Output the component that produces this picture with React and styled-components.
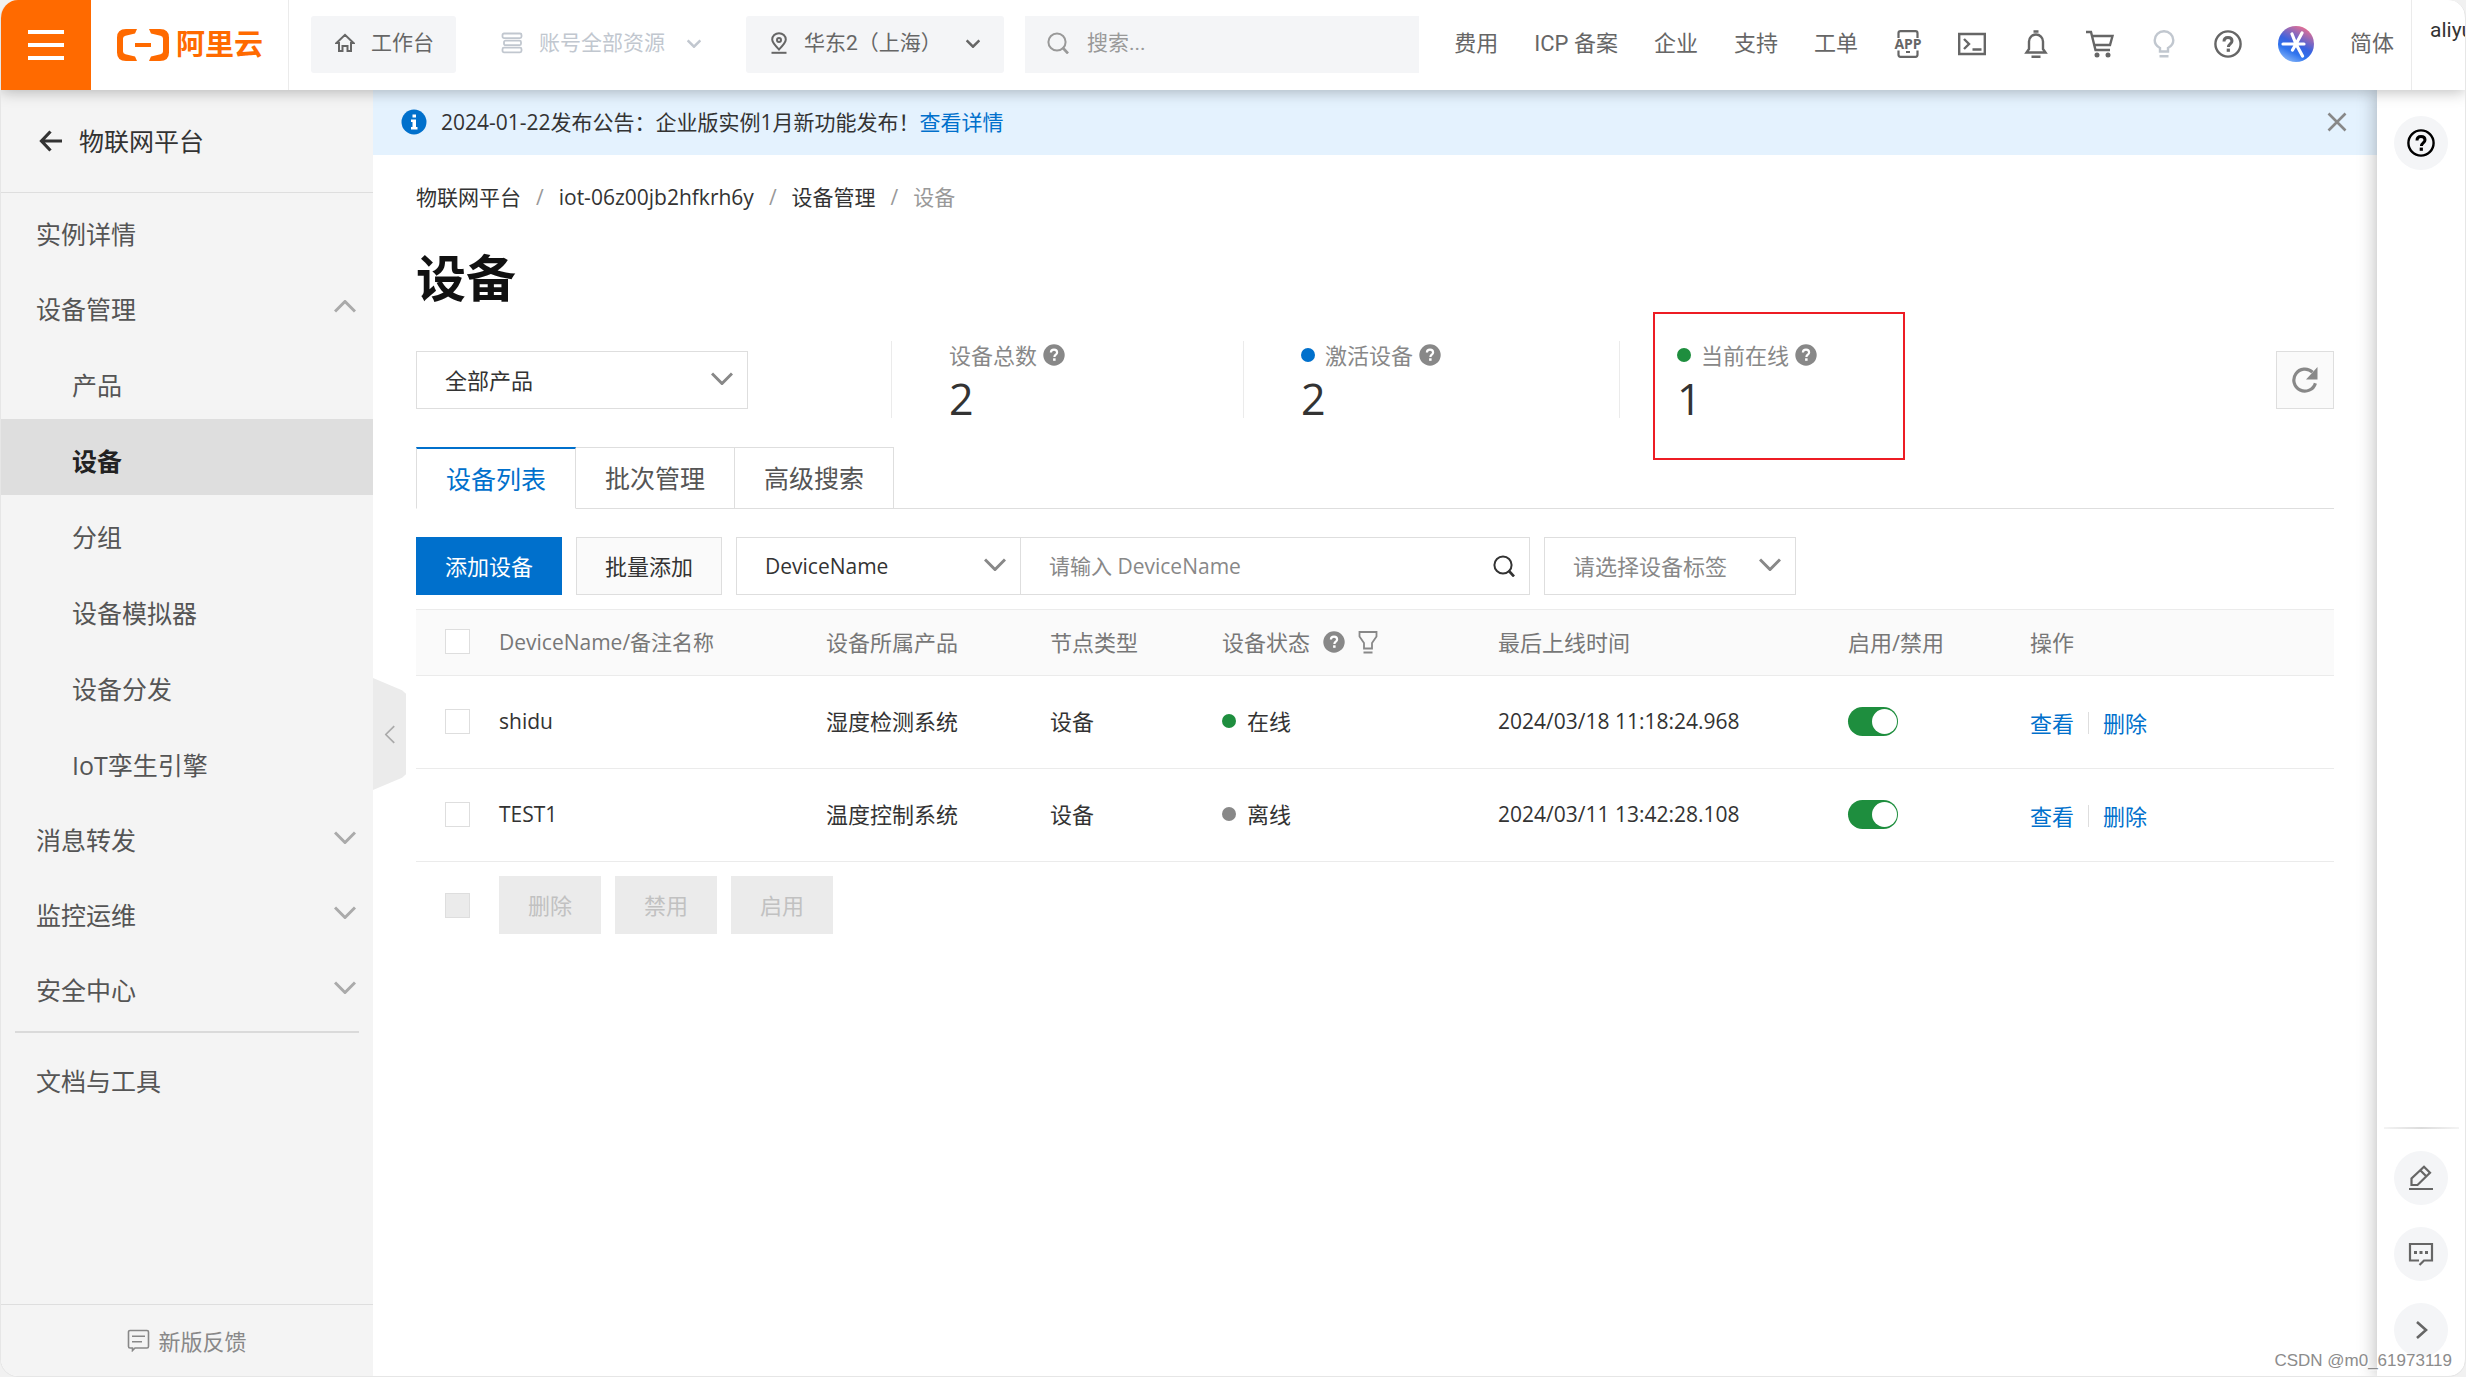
import styled, { createGlobalStyle } from 'styled-components';

const GlobalStyle = createGlobalStyle`
  *, *::before, *::after {
    box-sizing: border-box;
  }

  body {
    margin: 0;
    background: #f1f1f1;
    font-family: "Open Sans", "Noto Sans CJK SC", sans-serif;
    font-size: 22px;
    line-height: 32px;
    color: #333;
  }

  button, input, select {
    font: inherit;
    color: inherit;
    margin: 0;
    padding: 0;
    border: 0;
    border-radius: 0;
    background: none;
  }

  a {
    color: inherit;
    text-decoration: none;
  }

  svg {
    display: block;
    flex: none;
  }
`;

/* ---------- icons ---------- */

const Icon = ({ size = 24, w, h, box = '0 0 24 24', sw = 2, children }) => (
  <svg
    width={w || size}
    height={h || size}
    viewBox={box}
    fill="none"
    stroke="currentColor"
    strokeWidth={sw}
    aria-hidden="true"
  >
    {children}
  </svg>
);

const Chevron = ({ w = 22, h = 13, sw = 3 }) => (
  <Icon w={w} h={h} box="0 0 22 13" sw={sw}><path d="M1 1.5l10 10 10-10" /></Icon>
);

const HelpSolid = () => (
  <Icon size={22} box="0 0 22 22">
    <circle cx="11" cy="11" r="10.7" fill="currentColor" stroke="none" />
    <path d="M7.9 8.6c0-1.9 1.3-3 3.1-3s3.1 1.1 3.1 2.8c0 2.2-2.7 2.3-2.7 4.5" stroke="#fff" strokeWidth="2.2" />
    <rect x="10.1" y="14.3" width="2.5" height="2.5" fill="#fff" stroke="none" />
  </Icon>
);

const HelpRing = () => (
  <Icon size={28} box="0 0 28 28" sw={2.4}>
    <circle cx="14" cy="14" r="12.6" />
    <path d="M10 11.4c0-2.5 1.7-4 4-4s4 1.4 4 3.6c0 2.8-3.6 3-3.6 6" strokeWidth="3" />
    <rect x="12.7" y="18.6" width="3.2" height="3.2" fill="currentColor" stroke="none" />
  </Icon>
);

const HomeIcon = () => (
  <Icon w={20} h={20} box="0 0 20 20">
    <path d="M1.5 10L10 1.8 18.500 10H16v8h-3.500v-5h-5v5H4v-8z" />
  </Icon>
);

const StackIcon = () => (
  <Icon w={22} h={22} box="0 0 22 22" sw={1.8}>
    <rect x="1.500" y="1.500" width="19" height="4.600" rx="1.500" />
    <rect x="3" y="8.600" width="17" height="4.600" rx="1.500" />
    <rect x="1.500" y="15.700" width="19" height="4.600" rx="1.500" />
  </Icon>
);

const PinIcon = () => (
  <Icon w={18} h={22} box="0 0 18 22">
    <path d="M9 17.500C5 13.500 2.200 10.800 2.200 7.600a6.800 6.400 0 0 1 13.600 0C15.800 10.800 13 13.500 9 17.500z" />
    <circle cx="9" cy="8" r="2" />
    <path d="M1.500 20.800h15" />
  </Icon>
);

const SearchIcon = () => (
  <Icon size={22} box="0 0 22 22">
    <circle cx="10" cy="10" r="8.600" />
    <path d="M15.500 15.500l5.500 6" strokeWidth="2.600" />
  </Icon>
);

const AppIcon = () => (
  <Icon size={28} box="0 0 28 28" sw={2.2}>
    <path d="M4.500 8V3.200a2 2 0 0 1 2-2h15a2 2 0 0 1 2 2V8M4.500 20.500v4.300a2 2 0 0 0 2 2h15a2 2 0 0 0 2-2v-4.300M12 22h4" />
    <text
      x="14"
      y="19"
      textAnchor="middle"
      fill="currentColor"
      stroke="none"
      fontFamily="Open Sans"
      fontSize="14"
      fontWeight="700"
    >
      APP
    </text>
  </Icon>
);

const TerminalIcon = () => (
  <Icon size={28} box="0 0 28 28" sw={2.4}>
    <path d="M1.200 4h25.600v20H1.200zM6 9l5 5-5 5M14.500 19.500h9" />
  </Icon>
);

const BellIcon = () => (
  <Icon size={28} box="0 0 28 28" sw={2.4}>
    <path d="M4.500 22.500h19l-2.500-3.500v-7.500a7 7 0 0 0-14 0V19zM9.500 26.700h9M11.500 1.500h5" />
  </Icon>
);

const CartIcon = () => (
  <Icon size={28} box="0 0 28 28" sw={2.4}>
    <path d="M0 2h5l4.500 18H24M6 6h20.500l-2.500 9H8.500" />
    <circle cx="11" cy="25" r="2.500" fill="currentColor" stroke="none" />
    <circle cx="22" cy="25" r="2.500" fill="currentColor" stroke="none" />
  </Icon>
);

const BulbIcon = () => (
  <Icon size={28} box="0 0 28 28" sw={2.4}>
    <path d="M10 21.500V18C6.500 16.300 4.700 13.500 4.700 10.300a9.300 9 0 0 1 18.600 0c0 3.200-1.800 6-5.300 7.700v3.500zM9.500 26.200h9" />
  </Icon>
);

const SparkLogo = () => (
  <svg width="36" height="36" viewBox="0 0 36 36" aria-hidden="true">
    <defs>
      <linearGradient id="spark" x1="0.75" y1="0" x2="0.25" y2="1">
        <stop offset="0" stopColor="#f2708d" />
        <stop offset="0.5" stopColor="#3a63e0" />
        <stop offset="0.72" stopColor="#2f74ee" />
        <stop offset="1" stopColor="#8ab8f8" />
      </linearGradient>
    </defs>
    <circle cx="18" cy="18" r="18" fill="url(#spark)" />
    <path
      d="M5 18h21M14 8l4 10 6-11M18 18l-3.500 6M18 18l6.500 12"
      stroke="#fff"
      strokeWidth="3.200"
      strokeLinecap="round"
      fill="none"
    />
  </svg>
);

const BracketLogo = () => (
  <svg width="52" height="32" viewBox="0 0 52 32" fill="#ff6a00" aria-hidden="true">
    <path d="M20 0H9Q0 0 0 8.500V23.500Q0 32 9 32H20L18 27.500 8.500 25.200Q6 24.500 6 22.500V9.500Q6 7.500 8.500 6.800L18 4.500z" />
    <path d="M32 0h11q9 0 9 8.500v15Q52 32 43 32H32l2-4.500 9.500-2.300q2.500-.7 2.500-2.700V9.500q0-2-2.500-2.700L34 4.500z" />
    <rect x="18" y="14" width="16" height="4" />
  </svg>
);

const InfoIcon = () => (
  <svg width="26" height="26" viewBox="0 0 26 26" aria-hidden="true">
    <circle cx="13" cy="13" r="12.500" fill="#0070cc" />
    <path d="M11.500 5.500h3.500v3h-3.500zM10 10.500h5v7.500h1.500v2.500H10V18h1.500v-5H10z" fill="#fff" />
  </svg>
);

const CloseIcon = () => (
  <Icon size={20} box="0 0 20 20" sw={2.600}><path d="M1.500 1.500l17 17M18.500 1.500l-17 17" /></Icon>
);

const BackIcon = () => (
  <Icon w={24} h={22} box="0 0 24 22" sw={3.200}><path d="M23 11H3M11.500 1.500L2.500 11l9 9.500" /></Icon>
);

const FeedbackIcon = () => (
  <Icon size={23} box="0 0 23 23" sw={1.600}>
    <path d="M3 1.500h17a1.500 1.500 0 0 1 1.500 1.500v14.500A1.500 1.500 0 0 1 20 19H8l-2.500 2.500V19H3a1.500 1.500 0 0 1-1.500-1.500V3A1.500 1.500 0 0 1 3 1.500zM5 7.300h13M5 12.800h10" />
  </Icon>
);

const RefreshIcon = () => (
  <Icon size={26} box="0 0 26 26" sw={3.200}>
    <path d="M20.500 5.200A11 11 0 1 0 23.400 16.200" />
    <path d="M25.500 0v12.500H14z" fill="currentColor" stroke="none" />
  </Icon>
);

const FilterIcon = () => (
  <Icon w={20} h={24} box="0 0 20 24" sw={1.800}>
    <path d="M1.500 2h17v4.500L14 13v5.500H6V13L1.500 6.500zM5.500 22.500h9" />
  </Icon>
);

const PencilIcon = () => (
  <Icon size={26} box="0 0 26 26" sw={2.200}>
    <path d="M3.500 20v-6.500L16 1.700l6 6L9.500 20zM12.500 5.500l6 6M1 24h24" />
  </Icon>
);

const ChatIcon = () => (
  <Icon size={26} box="0 0 26 26" sw={2.200}>
    <path d="M11 19.500H2V3h22v16.500h-8L11.500 24" />
    <path d="M6 11.500h3M11.500 11.500h3M17 11.500h3" strokeWidth="3" />
  </Icon>
);

const ArrowRightIcon = () => (
  <Icon size={18} box="0 0 18 18" sw={2.600}><path d="M5 1l9 8-9 8" /></Icon>
);

/* ---------- shell ---------- */

const Shell = styled.div`
  display: flex;
  flex-direction: column;
  height: 100vh;
  border: 1px solid #e6e6e6;
  border-top: 0;
  border-radius: 18px;
  overflow: hidden;
  background: #fff;
`;

const Body = styled.div`
  flex: 1;
  min-height: 0;
  display: flex;
`;

/* ---------- top bar ---------- */

const TopBar = styled.header`
  flex: none;
  display: flex;
  align-items: center;
  height: 90px;
  background: #fff;
  box-shadow: 0 2px 14px rgba(0, 0, 0, 0.26);
  position: relative;
  z-index: 3;
  color: #666;
  font-family: Roboto, "Noto Sans CJK SC", sans-serif;
  white-space: nowrap;
`;

const MenuButton = styled.button`
  width: 90px;
  height: 90px;
  flex: none;
  display: flex;
  flex-direction: column;
  align-items: center;
  justify-content: center;
  gap: 9px;
  background: #ff6a00;

  span {
    width: 36px;
    height: 4px;
    background: #fff;
  }
`;

const Brand = styled.a`
  display: flex;
  align-items: center;
  gap: 7px;
  height: 90px;
  padding: 0 25px 0 26px;
  border-right: 1px solid #ebebeb;
  margin-right: 22px;
  color: #ff6a00;
  font-size: 29px;
  font-weight: 700;
`;

const TopTools = styled.div`
  display: flex;
  gap: 21px;
  padding-bottom: 2px;
`;

const TopButton = styled.button`
  display: flex;
  align-items: center;
  gap: 16px;
  width: ${(p) => p.$width}px;
  height: 57px;
  padding: 0 24px 2px;
  border-radius: 3px;
  background: ${(p) => (p.$muted ? 'none' : '#f4f5f7')};
  color: ${(p) => (p.$muted ? '#c1c7cf' : '#666')};
  font-size: 21px;

  svg:last-child:not(:first-child) {
    margin-left: auto;
  }
`;

const TopSearch = styled.label`
  display: flex;
  align-items: center;
  gap: 18px;
  width: 394px;
  height: 57px;
  padding: 0 22px 2px;
  background: #f4f5f7;
  color: #999;
  font-size: 21px;

  input {
    flex: 1;
    min-width: 0;
    outline: none;
  }

  input::placeholder {
    color: #999;
  }
`;

const TopNav = styled.nav`
  display: flex;
  align-items: center;
  gap: 36px;
  margin-left: auto;
  padding: 0 17px 3px 0;
`;

const IconButton = styled.button`
  display: flex;
  color: ${(p) => p.$color || 'inherit'};
`;

const Account = styled.a`
  flex: none;
  width: 54px;
  height: 90px;
  padding: 14px 0 0 18px;
  border-left: 1px solid #ebebeb;
  overflow: hidden;
  color: #333;
  font-size: 21px;
`;

/* ---------- side bar ---------- */

const Side = styled.aside`
  flex: none;
  width: 372px;
  display: flex;
  flex-direction: column;
  background: #f4f4f4;
  position: relative;
  font-size: 25px;
`;

const SideHead = styled.a`
  display: flex;
  align-items: center;
  gap: 16px;
  height: 103px;
  padding: 0 38px;
  border-bottom: 1px solid #dedede;
`;

const SideItem = styled.a`
  display: flex;
  align-items: center;
  justify-content: space-between;
  height: ${(p) => (p.$sub ? 76 : 75)}px;
  padding: 7px 17px 0 ${(p) => (p.$sub ? 71 : 35)}px;
  background: ${(p) => (p.$active ? '#dedede' : 'none')};
  color: ${(p) => (p.$active ? '#222' : '#555')};
  font-weight: ${(p) => (p.$active ? 700 : 400)};

  svg {
    color: #aaa;
    margin-bottom: 6px;
    transform: ${(p) => (p.$open ? 'rotate(180deg)' : 'none')};
  }
`;

const SideRule = styled.hr`
  width: 344px;
  margin: 7px 14px;
  border: 0;
  border-top: 2px solid #dadada;
`;

const SideFoot = styled.a`
  display: flex;
  align-items: center;
  justify-content: center;
  gap: 8px;
  height: 72px;
  margin-top: auto;
  border-top: 1px solid #dedede;
  color: #888;
  font-size: 22px;
`;

const CollapseHandle = styled.button`
  position: absolute;
  left: 100%;
  top: 588px;
  z-index: 1;
  display: flex;
  align-items: center;
  justify-content: center;
  width: 33px;
  height: 112px;
  background: #ebebeb;
  clip-path: polygon(0 0, 88% 11%, 100% 14%, 100% 86%, 88% 89%, 0 100%);
  color: #aaa;

  svg {
    transform: rotate(90deg);
  }
`;

/* ---------- main ---------- */

const Main = styled.main`
  flex: 1;
  min-width: 0;
`;

const Notice = styled.div`
  display: flex;
  align-items: center;
  height: 65px;
  padding: 0 30px 1px 28px;
  background: #e4f2fe;
  font-size: 21px;

  svg {
    margin-right: 14px;
  }

  button {
    margin-left: auto;
    color: #888;
  }

  button svg {
    margin: 0;
  }
`;

const Link = styled.a`
  color: #0070cc;
`;

const Page = styled.div`
  padding: 26px 43px;
`;

const Crumbs = styled.nav`
  display: flex;
  gap: 15px;
  font-size: 21px;

  span {
    color: #999;
  }
`;

const Title = styled.h1`
  margin: 33px 0 31px;
  font-size: 50px;
  line-height: 64px;
  font-weight: 700;
  color: #111;
`;

const Summary = styled.section`
  display: flex;
  align-items: center;
  height: 77px;
`;

const SelectBox = styled.label`
  position: relative;
  display: flex;
  align-items: center;
  width: ${(p) => p.$width}px;
  height: 58px;
  border: 1px solid #dedede;
  color: ${(p) => (p.$placeholder ? '#888' : '#333')};
  font-size: ${(p) => (p.$latin ? 21 : 22)}px;

  select {
    appearance: none;
    width: 100%;
    height: 100%;
    padding: 0 48px 0 28px;
    outline: none;
  }

  svg {
    position: absolute;
    right: 14px;
    top: 20px;
    color: #888;
    pointer-events: none;
  }
`;

const Stats = styled.div`
  display: flex;
  margin-left: 143px;
  height: 77px;
`;

const Stat = styled.div`
  position: relative;
  min-width: ${(p) => p.$width}px;
  padding: 0 57px;
  border-left: 1px solid #ebebeb;
`;

const StatLabel = styled.div`
  display: flex;
  align-items: center;
  gap: 6px;
  height: 27px;
  color: #888;
`;

const StatValue = styled.div`
  font-size: 43px;
  line-height: 62px;
`;

const Dot = styled.i`
  flex: none;
  width: 14px;
  height: 14px;
  margin-right: ${(p) => p.$gap || 4}px;
  border-radius: 50%;
  background: ${(p) => p.$color};
`;

const Marker = styled.div`
  position: absolute;
  left: 33px;
  top: -29px;
  width: 252px;
  height: 148px;
  border: 2px solid #ed1c24;
  pointer-events: none;
`;

const RefreshButton = styled.button`
  display: flex;
  align-items: center;
  justify-content: center;
  width: 58px;
  height: 58px;
  margin-left: auto;
  border: 1px solid #dedede;
  background: #fafafa;
  color: #888;
`;

const Tabs = styled.div`
  display: flex;
  margin-top: 29px;
  border-bottom: 1px solid #dedede;
`;

const Tab = styled.button`
  height: 62px;
  padding: 0 29px;
  margin-bottom: -1px;
  border: 1px solid #dedede;
  border-left-width: ${(p) => (p.$active ? 1 : 0)}px;
  border-top: ${(p) => (p.$active ? '2px solid #0070cc' : '1px solid #dedede')};
  border-bottom-color: ${(p) => (p.$active ? '#fff' : '#dedede')};
  color: ${(p) => (p.$active ? '#0070cc' : '#555')};
  font-size: 25px;
`;

const Toolbar = styled.div`
  display: flex;
  gap: 14px;
  margin: 28px 0 14px;
`;

const Button = styled.button`
  height: 58px;
  padding: 0 28px;
  border: 1px solid ${(p) => (p.$primary ? '#0070cc' : '#dedede')};
  background: ${(p) => (p.$primary ? '#0070cc' : '#fafafa')};
  color: ${(p) => (p.$primary ? '#fff' : '#333')};

  &:disabled {
    border-color: #ebebeb;
    background: #ebebeb;
    color: #c1c1c1;
  }
`;

const SearchGroup = styled.div`
  display: flex;
`;

const SearchBox = styled.label`
  display: flex;
  align-items: center;
  width: 509px;
  height: 58px;
  padding: 0 14px 0 28px;
  border: 1px solid #dedede;
  border-left: 0;
  font-size: 21px;

  input {
    flex: 1;
    min-width: 0;
    outline: none;
  }

  input::placeholder {
    color: #888;
  }
`;

const Table = styled.table`
  width: 100%;
  table-layout: fixed;
  border-collapse: collapse;
  text-align: left;

  th {
    height: 66px;
    padding: 0 0 2px 29px;
    border: solid #ebebeb;
    border-width: 1px 0;
    background: #fafafa;
    color: #777;
    font-weight: 400;
  }

  td {
    height: 93px;
    padding: 0 0 2px 29px;
    border-bottom: 1px solid #ebebeb;
  }

  .latin {
    font-size: 21px;
  }
`;

const Inline = styled.div`
  display: flex;
  align-items: center;
  gap: ${(p) => p.$gap || 0}px;

  svg {
    color: #888;
  }
`;

const Check = styled.input.attrs({ type: 'checkbox' })`
  appearance: none;
  display: block;
  flex: none;
  width: 25px;
  height: 25px;
  border: 1px solid #dedede;
  background: #fff;

  &:disabled {
    background: #ebebeb;
  }
`;

const Switch = styled.input.attrs({ type: 'checkbox', role: 'switch' })`
  appearance: none;
  display: flex;
  align-items: center;
  width: 50px;
  height: 29px;
  padding: 0 1px;
  border-radius: 15px;
  background: #aaa;

  &::before {
    content: '';
    width: 25px;
    height: 25px;
    border-radius: 50%;
    background: #fff;
  }

  &:checked {
    justify-content: flex-end;
    background: #1e8e3e;
  }
`;

const Actions = styled.div`
  display: flex;
  align-items: center;
  padding-top: 4px;

  a + a {
    margin-left: 14px;
    padding-left: 14px;
    line-height: 22px;
    border-left: 1px solid #dedede;
  }
`;

const BatchBar = styled.div`
  display: flex;
  align-items: center;
  gap: 14px;
  padding: 14px 29px;

  input {
    margin-right: 15px;
  }
`;

/* ---------- right rail ---------- */

const Rail = styled.aside`
  flex: none;
  width: 88px;
  display: flex;
  flex-direction: column;
  align-items: center;
  gap: 22px;
  padding: 26px 0 19px;
  background: #fff;
  box-shadow: 0 0 18px rgba(0, 0, 0, 0.3);
  z-index: 2;
`;

const RailRule = styled.hr`
  width: 75px;
  height: 2px;
  margin: auto 0 0;
  border: 0;
  background: linear-gradient(90deg, #f4f4f4, #dcdcdc, #f4f4f4);
`;

const RoundButton = styled.button`
  display: flex;
  align-items: center;
  justify-content: center;
  width: 54px;
  height: 54px;
  border-radius: 50%;
  background: #f4f5f7;
  color: ${(p) => (p.$dark ? '#000' : '#666')};
`;

const Watermark = styled.div`
  position: absolute;
  right: 14px;
  bottom: 4px;
  z-index: 4;
  font-family: "Liberation Sans", sans-serif;
  font-size: 17px;
  line-height: 24px;
  color: #8c8c8c;
  text-shadow: 1px 1px 0 #fff;
`;

const menu = [
  { text: '实例详情' },
  { text: '设备管理', arrow: true, open: true },
  { text: '产品', sub: true },
  { text: '设备', sub: true, active: true },
  { text: '分组', sub: true },
  { text: '设备模拟器', sub: true },
  { text: '设备分发', sub: true },
  { text: 'IoT孪生引擎', sub: true },
  { text: '消息转发', arrow: true },
  { text: '监控运维', arrow: true },
  { text: '安全中心', arrow: true },
];

const devices = [
  { name: 'shidu', product: '湿度检测系统', type: '设备', status: '在线', color: '#1e8e3e', time: '2024/03/18 11:18:24.968' },
  { name: 'TEST1', product: '温度控制系统', type: '设备', status: '离线', color: '#888', time: '2024/03/11 13:42:28.108' },
];

const Header = () => (
  <TopBar>
    <MenuButton aria-label="菜单"><span /><span /><span /></MenuButton>
    <Brand href="#"><BracketLogo />阿里云</Brand>
    <TopTools>
      <TopButton $width={145}><HomeIcon />工作台</TopButton>
      <TopButton $width={248} $muted><StackIcon />账号全部资源<Chevron w={14} h={9} sw={4} /></TopButton>
      <TopButton $width={258}><PinIcon />华东2（上海）<Chevron w={14} h={9} sw={4} /></TopButton>
      <TopSearch>
        <SearchIcon />
        <input placeholder="搜索..." aria-label="搜索" />
      </TopSearch>
    </TopTools>
    <TopNav>
      {['费用', 'ICP 备案', '企业', '支持', '工单'].map((item) => (
        <a href="#" key={item}>{item}</a>
      ))}
      <IconButton aria-label="APP"><AppIcon /></IconButton>
      <IconButton aria-label="终端"><TerminalIcon /></IconButton>
      <IconButton aria-label="消息"><BellIcon /></IconButton>
      <IconButton aria-label="购物车"><CartIcon /></IconButton>
      <IconButton aria-label="提示" $color="#c1c7cf"><BulbIcon /></IconButton>
      <IconButton aria-label="帮助"><HelpRing /></IconButton>
      <IconButton aria-label="助手"><SparkLogo /></IconButton>
      <a href="#">简体</a>
    </TopNav>
    <Account href="#">aliyu</Account>
  </TopBar>
);

const Sidebar = () => (
  <Side>
    <SideHead href="#"><BackIcon />物联网平台</SideHead>
    {menu.map((item) => (
      <SideItem href="#" key={item.text} $sub={item.sub} $active={item.active} $open={item.open}>
        {item.text}
        {item.arrow && <Chevron />}
      </SideItem>
    ))}
    <SideRule />
    <SideItem href="#">文档与工具</SideItem>
    <SideFoot href="#"><FeedbackIcon />新版反馈</SideFoot>
    <CollapseHandle aria-label="收起"><Chevron w={20} h={11} sw={2} /></CollapseHandle>
  </Side>
);

const DeviceTable = () => (
  <Table>
    <colgroup>
      <col width="54" />
      <col width="327" />
      <col width="224" />
      <col width="172" />
      <col width="276" />
      <col width="350" />
      <col width="182" />
      <col />
    </colgroup>
    <thead>
      <tr>
        <th><Check aria-label="全选" /></th>
        <th className="latin">DeviceName/备注名称</th>
        <th>设备所属产品</th>
        <th>节点类型</th>
        <th>
          <Inline $gap={13}>设备状态<HelpSolid /><FilterIcon /></Inline>
        </th>
        <th>最后上线时间</th>
        <th>启用/禁用</th>
        <th>操作</th>
      </tr>
    </thead>
    <tbody>
      {devices.map((device) => (
        <tr key={device.name}>
          <td><Check aria-label={device.name} /></td>
          <td className="latin">{device.name}</td>
          <td>{device.product}</td>
          <td>{device.type}</td>
          <td><Inline><Dot $color={device.color} $gap={11} />{device.status}</Inline></td>
          <td className="latin">{device.time}</td>
          <td><Switch defaultChecked aria-label="启用" /></td>
          <td>
            <Actions>
              <Link href="#">查看</Link>
              <Link href="#">删除</Link>
            </Actions>
          </td>
        </tr>
      ))}
    </tbody>
  </Table>
);

const App = () => {
  return (
    <>
      <GlobalStyle />
      <Shell>
        <Header />
        <Body>
          <Sidebar />
          <Main>
            <Notice>
              <InfoIcon />
              2024-01-22发布公告：企业版实例1月新功能发布！
              <Link href="#">查看详情</Link>
              <IconButton aria-label="关闭" $color="#888"><CloseIcon /></IconButton>
            </Notice>
            <Page>
              <Crumbs>
                <a href="#">物联网平台</a>
                <span>/</span>
                <a href="#">iot-06z00jb2hfkrh6y</a>
                <span>/</span>
                <a href="#">设备管理</a>
                <span>/</span>
                <span>设备</span>
              </Crumbs>
              <Title>设备</Title>
              <Summary>
                <SelectBox $width={332}>
                  <select aria-label="产品"><option>全部产品</option></select>
                  <Chevron />
                </SelectBox>
                <Stats>
                  <Stat $width={352}>
                    <StatLabel>设备总数<HelpSolid /></StatLabel>
                    <StatValue>2</StatValue>
                  </Stat>
                  <Stat $width={376}>
                    <StatLabel><Dot $color="#0070cc" />激活设备<HelpSolid /></StatLabel>
                    <StatValue>2</StatValue>
                  </Stat>
                  <Stat>
                    <StatLabel><Dot $color="#1e8e3e" />当前在线<HelpSolid /></StatLabel>
                    <StatValue>1</StatValue>
                    <Marker />
                  </Stat>
                </Stats>
                <RefreshButton aria-label="刷新"><RefreshIcon /></RefreshButton>
              </Summary>
              <Tabs>
                <Tab $active>设备列表</Tab>
                <Tab>批次管理</Tab>
                <Tab>高级搜索</Tab>
              </Tabs>
              <Toolbar>
                <Button $primary>添加设备</Button>
                <Button>批量添加</Button>
                <SearchGroup>
                  <SelectBox $width={285} $latin>
                    <select aria-label="搜索字段"><option>DeviceName</option></select>
                    <Chevron />
                  </SelectBox>
                  <SearchBox>
                    <input placeholder="请输入 DeviceName" aria-label="DeviceName" />
                    <SearchIcon />
                  </SearchBox>
                </SearchGroup>
                <SelectBox $width={252} $placeholder>
                  <select aria-label="设备标签"><option>请选择设备标签</option></select>
                  <Chevron />
                </SelectBox>
              </Toolbar>
              <DeviceTable />
              <BatchBar>
                <Check disabled aria-label="全选" />
                <Button disabled>删除</Button>
                <Button disabled>禁用</Button>
                <Button disabled>启用</Button>
              </BatchBar>
            </Page>
          </Main>
          <Rail>
            <RoundButton $dark aria-label="帮助"><HelpRing /></RoundButton>
            <RailRule />
            <RoundButton aria-label="编辑"><PencilIcon /></RoundButton>
            <RoundButton aria-label="反馈"><ChatIcon /></RoundButton>
            <RoundButton aria-label="展开"><ArrowRightIcon /></RoundButton>
          </Rail>
        </Body>
      </Shell>
      <Watermark>CSDN @m0_61973119</Watermark>
    </>
  );
};

export default App;
